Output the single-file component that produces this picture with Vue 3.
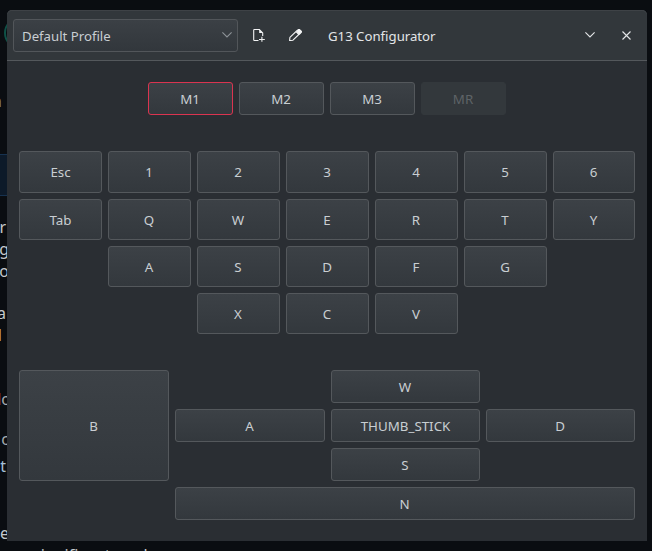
<script setup>
const mButtons = [
  { label: 'M1', active: true },
  { label: 'M2' },
  { label: 'M3' },
  { label: 'MR', disabled: true },
]

// col is 1-based, rows are laid out on the 7 column grid
const keys = [
  { label: 'Esc', col: 1 }, { label: '1', col: 2 }, { label: '2', col: 3 }, { label: '3', col: 4 },
  { label: '4', col: 5 }, { label: '5', col: 6 }, { label: '6', col: 7 },
  { label: 'Tab', col: 1 }, { label: 'Q', col: 2 }, { label: 'W', col: 3 }, { label: 'E', col: 4 },
  { label: 'R', col: 5 }, { label: 'T', col: 6 }, { label: 'Y', col: 7 },
  { label: 'A', col: 2 }, { label: 'S', col: 3 }, { label: 'D', col: 4 }, { label: 'F', col: 5 }, { label: 'G', col: 6 },
  { label: 'X', col: 3 }, { label: 'C', col: 4 }, { label: 'V', col: 5 },
]

// bits of the window behind that stick out on the left
const behind = [
  { text: 'n', y: 92, end: 2, color: '#7f868c' },
  { text: 'r', y: 218, end: 6, color: '#c5c9cc' },
  { text: 'eg', y: 240, end: 9, color: '#c5c9cc' },
  { text: 'o', y: 262, end: 9, color: '#c5c9cc' },
  { text: 'a', y: 304, end: 6, color: '#c5c9cc' },
  { text: 'l', y: 326, end: 2, color: '#c9b68c' },
  { lead: 'l', text: 'o', y: 390, end: 11, color: '#a5abb0' },
  { text: 'c', y: 430, end: 9, color: '#a5abb0' },
  { text: 't', y: 457, end: 6, color: '#a5c0d8' },
  { text: 'ne', y: 524, end: 9, color: '#c5c9cc' },
]
</script>

<template>
  <div class="desktop">
    <div class="ring"></div>
    <div class="selected-row"></div>
    <span
      v-for="b in behind"
      :key="b.text + b.y"
      class="frag"
      :style="{ top: b.y + 'px', right: 652 - b.end + 'px', color: b.color }"
    ><span v-if="b.lead" class="lead">{{ b.lead }}</span>{{ b.text }}</span>
    <span class="below">significant work</span>

    <div class="window">
      <header class="titlebar">
        <button class="combo">
          <span class="combo-text">Default Profile</span>
          <svg width="10" height="6" viewBox="0 0 10 6"><path d="M.4.4 5 5 9.6.4" fill="none" stroke="#8d9297" stroke-width="1.1" /></svg>
        </button>
        <button class="tool">
          <svg width="12" height="13" viewBox="0 0 12 13" fill="none" stroke="#f2f3f4" stroke-width="1.1">
            <path d="M5.5 11.5H1.4a.7.7 0 0 1-.7-.7V1.2A.7.7 0 0 1 1.4.5h4.9l3.4 3.4V7" />
            <path d="M6.2.5v3.6h3.6z" fill="#f2f3f4" stroke="none" />
            <path d="M6 10.5h5.8M8.9 7.8v5" />
          </svg>
        </button>
        <button class="tool">
          <svg width="13" height="12" viewBox="0 0 13 12" fill="none" stroke="#f2f3f4" stroke-width="1.1">
            <path d="M.9 8.4 7 2.6l2.9 2.9-6 5.7-3.3.4z" />
            <path d="M7.6 2 9.3.6a1 1 0 0 1 1.3 0l1.6 1.6a1 1 0 0 1 0 1.3L10.5 5.2z" fill="#f2f3f4" />
          </svg>
        </button>
        <span class="title">G13 Configurator</span>
        <button class="win-btn">
          <svg width="10" height="6" viewBox="0 0 10 6"><path d="M.4.4 5 5 9.6.4" fill="none" stroke="#e4e6e8" stroke-width="1.1" /></svg>
        </button>
        <button class="win-btn close">
          <svg width="9" height="9" viewBox="0 0 9 9"><path d="M.5.5l8 8M8.5.5l-8 8" fill="none" stroke="#e4e6e8" stroke-width="1.1" /></svg>
        </button>
      </header>

      <main class="body">
        <div class="m-row">
          <button
            v-for="m in mButtons"
            :key="m.label"
            class="key"
            :class="{ active: m.active, disabled: m.disabled }"
          >{{ m.label }}</button>
        </div>

        <div class="keys">
          <button
            v-for="k in keys"
            :key="k.label"
            class="key"
            :class="{ edge: k.col === 1 }"
            :style="{ gridColumn: k.col }"
          >{{ k.label }}</button>
        </div>

        <div class="stick">
          <button class="key big">B</button>
          <button class="key w">W</button>
          <button class="key a">A</button>
          <button class="key thumb">THUMB_STICK</button>
          <button class="key d">D</button>
          <button class="key s">S</button>
          <button class="key n">N</button>
        </div>
      </main>
    </div>
  </div>
</template>

<style scoped>
.desktop {
  position: relative;
  width: 652px;
  height: 551px;
  overflow: hidden;
  background: #0a0d11;
  font-family: "Noto Sans", sans-serif;
  font-size: 13.33px;
}

.ring {
  position: absolute;
  left: 4px;
  top: 17px;
  width: 28px;
  height: 28px;
  border: 2px solid #0f5147;
  border-radius: 50%;
}

.selected-row {
  position: absolute;
  left: 0;
  top: 154px;
  width: 7px;
  height: 42px;
  box-sizing: border-box;
  background: #0d1a29;
  border-top: 1px solid #17324f;
  border-bottom: 1px solid #17324f;
}

.frag {
  position: absolute;
  white-space: nowrap;
  font-size: 16px;
  line-height: 18px;
}

.lead {
  color: #c8742c;
}

.below {
  position: absolute;
  left: 33px;
  top: 546px;
  white-space: nowrap;
  color: #c5c9cc;
  font-size: 16px;
  line-height: 18px;
}

.window {
  position: absolute;
  left: 7px;
  top: 10px;
  width: 640px;
  height: 531px;
  background: #2a2e33;
  border-radius: 5px 5px 0 0;
  display: flex;
  flex-direction: column;
}

button {
  font: inherit;
  padding: 0;
  cursor: default;
}

.titlebar {
  height: 51px;
  box-sizing: border-box;
  flex: none;
  display: flex;
  align-items: center;
  padding: 0 0 0 6px;
  background: #32373b;
  border-radius: 5px 5px 0 0;
  border-bottom: 1px solid #54585c;
  box-shadow: inset 0 1px 0 #3e4246;
}

.combo {
  width: 225px;
  height: 33px;
  box-sizing: border-box;
  display: flex;
  align-items: center;
  justify-content: space-between;
  padding: 0 5px 0 8px;
  color: #c9ced2;
  background: linear-gradient(#3b4045, #32373c);
  border: 1px solid #52565a;
  border-radius: 3px;
}

.combo-text {
  padding-top: 2px;
  font-size: 13.2px;
}

.tool {
  width: 28px;
  height: 28px;
  margin-left: 7px;
  display: flex;
  align-items: center;
  justify-content: center;
  background: none;
  border: 0;
}

.tool + .tool {
  margin-left: 8px;
}

.title {
  flex: 1;
  margin-left: 19px;
  padding-top: 2px;
  font-size: 13.2px;
  color: #e3e5e7;
}

.win-btn {
  width: 24px;
  height: 24px;
  margin-right: 12px;
  display: flex;
  align-items: center;
  justify-content: center;
  background: none;
  border: 0;
}

.close {
  margin-right: 9px;
}

.body {
  padding: 21px 12px 0;
}

.key {
  box-sizing: border-box;
  display: block;
  min-width: 0;
  padding-right: 1px;
  color: #c9ced2;
  background: linear-gradient(#3c4146, #33383d);
  border: 1px solid #54585c;
  border-radius: 3px;
}

.key.edge,
.key.thumb {
  padding-right: 0;
}

.m-row {
  display: flex;
  justify-content: center;
  gap: 6px;
}

.m-row .key {
  width: 85px;
  height: 33px;
}

.m-row .active {
  border-color: #da3450;
}

.m-row .disabled {
  color: #5e6367;
  background: #33383c;
  border-color: #33383c;
}

.keys {
  margin-top: 36px;
  display: grid;
  grid-template-columns: repeat(6, 83px) 82px;
  grid-template-rows: 42px repeat(3, 41px);
  gap: 6px;
}

.stick {
  margin-top: 36px;
  display: grid;
  grid-template-columns: 150px 150px 149px 149px;
  grid-template-rows: repeat(4, 33px);
  gap: 6px;
}

.big { grid-column: 1; grid-row: 1 / span 3; }
.w { grid-column: 3; grid-row: 1; }
.a { grid-column: 2; grid-row: 2; }
.thumb { grid-column: 3; grid-row: 2; }
.d { grid-column: 4; grid-row: 2; }
.s { grid-column: 3; grid-row: 3; }
.n { grid-column: 2 / span 3; grid-row: 4; }
</style>

<style>
html, body {
  background: #0a0d11;
}
</style>
